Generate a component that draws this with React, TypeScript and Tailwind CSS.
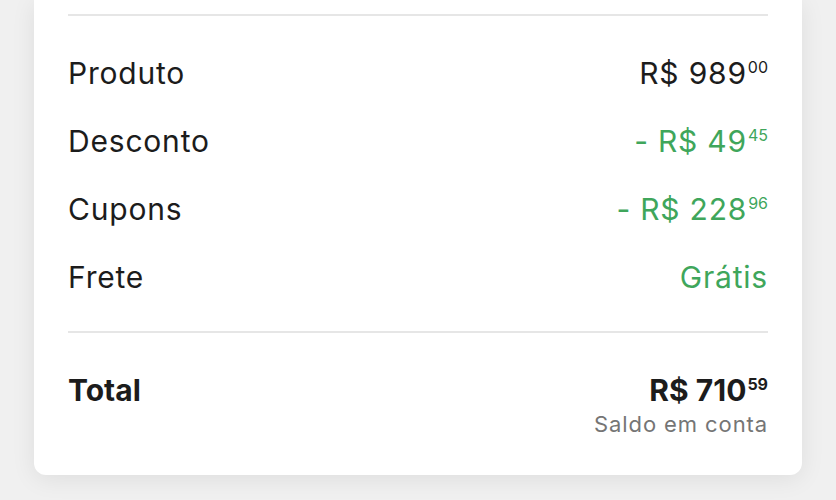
import React from "react";

function Price({ main, cents, className = "" }: { main: string; cents: string; className?: string }) {
  return (
    <span className={`inline-flex items-start leading-none ${className}`}>
      <span>{main}</span>
      <span className="ml-[1px] text-[16px] leading-none tracking-normal mt-[1px]">{cents}</span>
    </span>
  );
}

export default function App() {
  const rows = [
    { label: "Produto", value: <Price main="R$ 989" cents="00" className="text-[#1c1c1c]" /> },
    { label: "Desconto", value: <Price main="- R$ 49" cents="45" className="text-[#3fa65b]" /> },
    { label: "Cupons", value: <Price main="- R$ 228" cents="96" className="text-[#3fa65b]" /> },
    { label: "Frete", value: <span className="leading-none text-[#3fa65b]">Grátis</span> },
  ];
  return (
    <div
      className="w-[836px] h-[500px] bg-[#f0f0f0] overflow-hidden"
      style={{ fontFamily: "Inter, 'Open Sans', sans-serif" }}
    >
      <div className="mx-[34px] bg-white rounded-b-[12px] shadow-[0_4px_24px_rgba(0,0,0,0.08)] px-[34px] pt-[14px] pb-[40px]">
        <div className="h-[2px] bg-[#e6e6e6]" />
        <div className="pt-[23px] pb-[20px]">
          {rows.map((r) => (
            <div key={r.label} className="h-[68px] flex items-center justify-between text-[30px] tracking-[0.8px] text-[#1c1c1c]">
              <span className="leading-none">{r.label}</span>
              {r.value}
            </div>
          ))}
        </div>
        <div className="h-[2px] bg-[#e6e6e6]" />
        <div className="pt-[42px] flex justify-between items-start">
          <span className="text-[30px] font-bold leading-none text-[#1c1c1c]">Total</span>
          <div className="flex flex-col items-end">
            <Price main="R$ 710" cents="59" className="text-[30px] font-bold text-[#1c1c1c]" />
            <span className="mt-[8px] text-[22px] leading-none tracking-[0.9px] text-[#757575]">Saldo em conta</span>
          </div>
        </div>
      </div>
    </div>
  );
}
